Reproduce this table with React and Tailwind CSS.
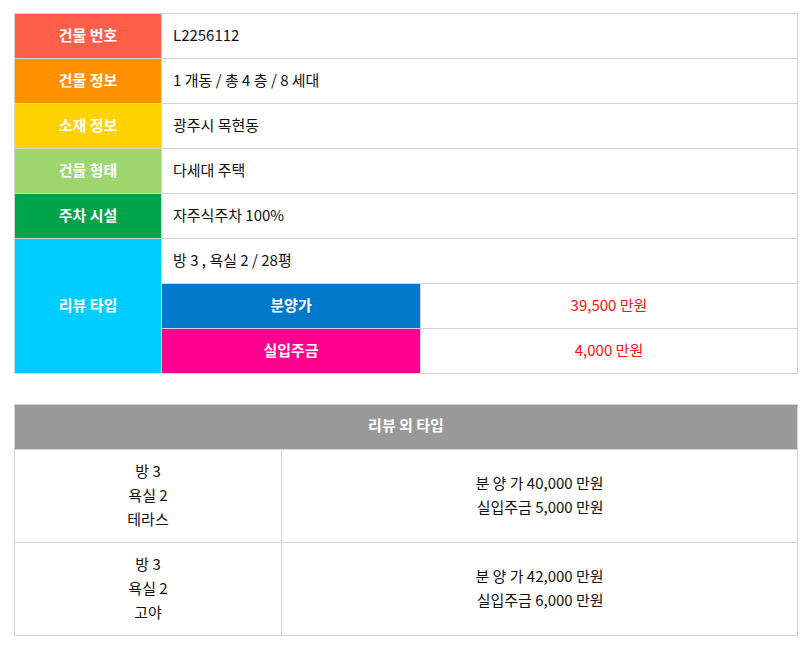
const rows = [
  { label: "건물 번호", value: "L2256112", bg: "bg-[#ff5f4a]" },
  { label: "건물 정보", value: "1 개동 / 총 4 층 / 8 세대", bg: "bg-[#ff9100]" },
  { label: "소재 정보", value: "광주시 목현동", bg: "bg-[#ffd200]" },
  { label: "건물 형태", value: "다세대 주택", bg: "bg-[#9dd56f]" },
  { label: "주차 시설", value: "자주식주차 100%", bg: "bg-[#00a54b]" },
];

const otherTypes = [
  { lines: ["방 3", "욕실 2", "테라스"], price: "분 양 가 40,000 만원", deposit: "실입주금 5,000 만원" },
  { lines: ["방 3", "욕실 2", "고야"], price: "분 양 가 42,000 만원", deposit: "실입주금 6,000 만원" },
];

export default function App() {
  return (
    <div className="min-h-[650px] bg-white pt-[13px] pl-[14px] font-['Noto_Sans_CJK_KR','Noto_Sans',sans-serif] text-[15px] text-[#111]">
      {/* 기본 정보 */}
      <div className="grid w-[784px] grid-cols-[146px_258px_376px] grid-rows-[repeat(8,44px)] gap-px border border-[#d3d3d3] bg-[#d3d3d3] leading-[20px]">
        {rows.map((row) => (
          <div key={row.label} className="contents">
            <div className={`flex items-center justify-center pb-[3px] font-semibold text-white ${row.bg}`}>
              {row.label}
            </div>
            <div className="col-span-2 flex items-center bg-white pb-[3px] pl-[11px]">{row.value}</div>
          </div>
        ))}

        <div className="row-span-3 flex items-center justify-center bg-[#00cdff] pb-[3px] font-semibold text-white">
          리뷰 타입
        </div>
        <div className="col-span-2 flex items-center bg-white pb-[3px] pl-[11px]">방 3 , 욕실 2 / 28평</div>
        <div className="flex items-center justify-center bg-[#0078cb] pb-[3px] font-semibold text-white">분양가</div>
        <div className="flex items-center justify-center bg-white pb-[3px] text-[#ff1010]">39,500 만원</div>
        <div className="flex items-center justify-center bg-[#ff008f] pb-[3px] font-semibold text-white">실입주금</div>
        <div className="flex items-center justify-center bg-white pb-[3px] text-[#ff1010]">4,000 만원</div>
      </div>

      {/* 리뷰 외 타입 */}
      <div className="mt-[30px] grid w-[784px] grid-cols-[266px_515px] grid-rows-[44px_92px_92px] gap-px border border-[#d3d3d3] bg-[#d3d3d3]">
        <div className="col-span-2 flex items-center justify-center bg-[#999999] pb-[3px] font-semibold text-white">
          리뷰 외 타입
        </div>
        {otherTypes.map((t, i) => (
          <div key={i} className="contents">
            <div className="flex flex-col items-center justify-center bg-white pb-[2px] leading-[24px]">
              {t.lines.map((l) => (
                <span key={l}>{l}</span>
              ))}
            </div>
            <div className="flex items-center justify-center bg-white pb-[2px] leading-[24px]">
              <div className="flex flex-col items-end">
                <span>{t.price}</span>
                <span>{t.deposit}</span>
              </div>
            </div>
          </div>
        ))}
      </div>
    </div>
  );
}
